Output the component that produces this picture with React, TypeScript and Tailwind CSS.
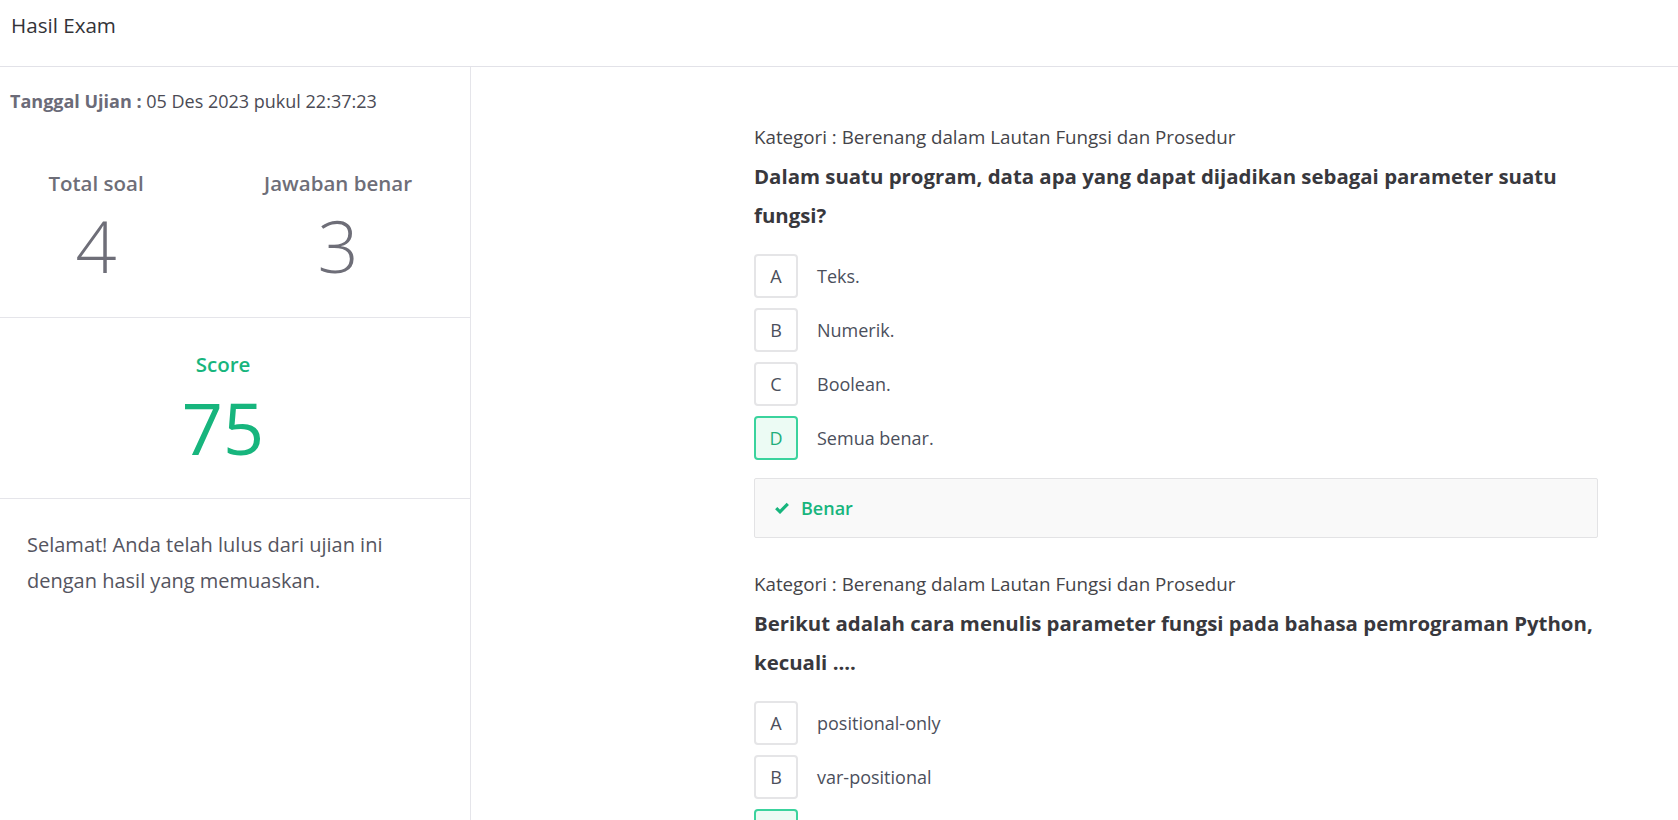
import React from "react";

type Opt = { key: string; text: string; correct?: boolean };

const CheckIcon = () => (
  <svg width="14" height="12" viewBox="0 0 14 12" className="shrink-0">
    <path d="M1.2 6.2 L5 9.8 L12.8 1.8" fill="none" stroke="#17b57d" strokeWidth="3.2" strokeLinecap="butt" strokeLinejoin="miter" />
  </svg>
);

function Question({
  category,
  question,
  options,
  showResult,
}: {
  category: string;
  question: string;
  options: Opt[];
  showResult?: boolean;
}) {
  return (
    <div className="flex flex-col">
      <div className="text-[18.75px] leading-[28px] text-[#444449]">Kategori : {category}</div>
      <div className="mt-[6px] text-[20.4px] leading-[39px] font-bold text-[#38383d]">{question}</div>
      <div className="mt-[19px] flex flex-col gap-[10px]">
        {options.map((o) => (
          <div key={o.key} className="flex items-center gap-[19px]">
            <div
              className={
                o.correct
                  ? "flex h-[44px] w-[44px] shrink-0 items-center justify-center rounded-[4px] border-2 border-[#3ad39d] bg-[#ecfbf4] text-[18px] text-[#1fae7a]"
                  : "flex h-[44px] w-[44px] shrink-0 items-center justify-center rounded-[4px] border-2 border-[#e5e5e7] bg-white text-[18px] text-[#4b4f5c]"
              }
            >
              {o.key}
            </div>
            <div className="text-[18px] leading-[28px] text-[#4b4f5c]">{o.text}</div>
          </div>
        ))}
      </div>
      {showResult && (
        <div className="mt-[18px] flex h-[60px] items-center gap-[12px] rounded-[2px] border border-[#e3e3e5] bg-[#f9f9f9] pl-[20px]">
          <CheckIcon />
          <span className="text-[18px] font-semibold text-[#17b57d]">Benar</span>
        </div>
      )}
    </div>
  );
}

export default function App() {
  return (
    <div
      className="min-h-screen bg-white"
      style={{ fontFamily: '"Open Sans", "Noto Sans", sans-serif' }}
    >
      <header className="h-[67px] border-b border-[#e2e2e8] pl-[11px] pt-[11px]">
        <h1 className="text-[20.6px] leading-[28px] font-medium text-[#333338]">Hasil Exam</h1>
      </header>
      <div className="flex">
        <aside className="w-[471px] shrink-0 border-r border-[#e5e5ea]">
          <div className="border-b border-[#e5e5ea] pb-[36px] pt-[20px]">
            <div className="pl-[10px] text-[18px] leading-[28px] text-[#4b4b55]">
              <span className="font-bold text-[#6b6b78]">Tanggal Ujian :</span> 05 Des 2023 pukul 22:37:23
            </div>
            <div className="mt-[54px] grid grid-cols-[192px_192px] gap-x-[50px]">
              <div className="flex flex-col items-center">
                <div className="text-[20.5px] leading-[28px] font-semibold text-[#6e6e78]">Total soal</div>
                <div className="mt-[12px] text-[72px] leading-[72px] font-light text-[#6e6e78]">4</div>
              </div>
              <div className="flex flex-col items-center">
                <div className="text-[20.5px] leading-[28px] font-semibold text-[#6e6e78]">Jawaban benar</div>
                <div className="mt-[12px] text-[72px] leading-[72px] font-light text-[#6e6e78]">3</div>
              </div>
            </div>
          </div>
          <div className="flex w-[446px] flex-col items-center pb-[35px] pt-[32px]">
            <div className="text-[20.5px] leading-[28px] font-semibold text-[#17b57d]">Score</div>
            <div className="mt-[13px] text-[72px] leading-[72px] font-normal text-[#17b57d]">75</div>
          </div>
          <div className="border-t border-[#e5e5ea] px-[27px] pt-[28px] pb-[40px]">
            <p className="w-[400px] text-[20px] leading-[36px] text-[#55555f]">
              Selamat! Anda telah lulus dari ujian ini dengan hasil yang memuaskan.
            </p>
          </div>
        </aside>
        <main className="flex-1 pl-[283px] pt-[56px] pb-[40px]">
          <div className="flex w-[844px] flex-col gap-[32px]">
            <Question
              category="Berenang dalam Lautan Fungsi dan Prosedur"
              question="Dalam suatu program, data apa yang dapat dijadikan sebagai parameter suatu fungsi?"
              options={[
                { key: "A", text: "Teks." },
                { key: "B", text: "Numerik." },
                { key: "C", text: "Boolean." },
                { key: "D", text: "Semua benar.", correct: true },
              ]}
              showResult
            />
            <Question
              category="Berenang dalam Lautan Fungsi dan Prosedur"
              question="Berikut adalah cara menulis parameter fungsi pada bahasa pemrograman Python, kecuali ...."
              options={[
                { key: "A", text: "positional-only" },
                { key: "B", text: "var-positional" },
                { key: "C", text: "keyword-positional", correct: true },
                { key: "D", text: "var-keyword" },
              ]}
              showResult
            />
          </div>
        </main>
      </div>
    </div>
  );
}
